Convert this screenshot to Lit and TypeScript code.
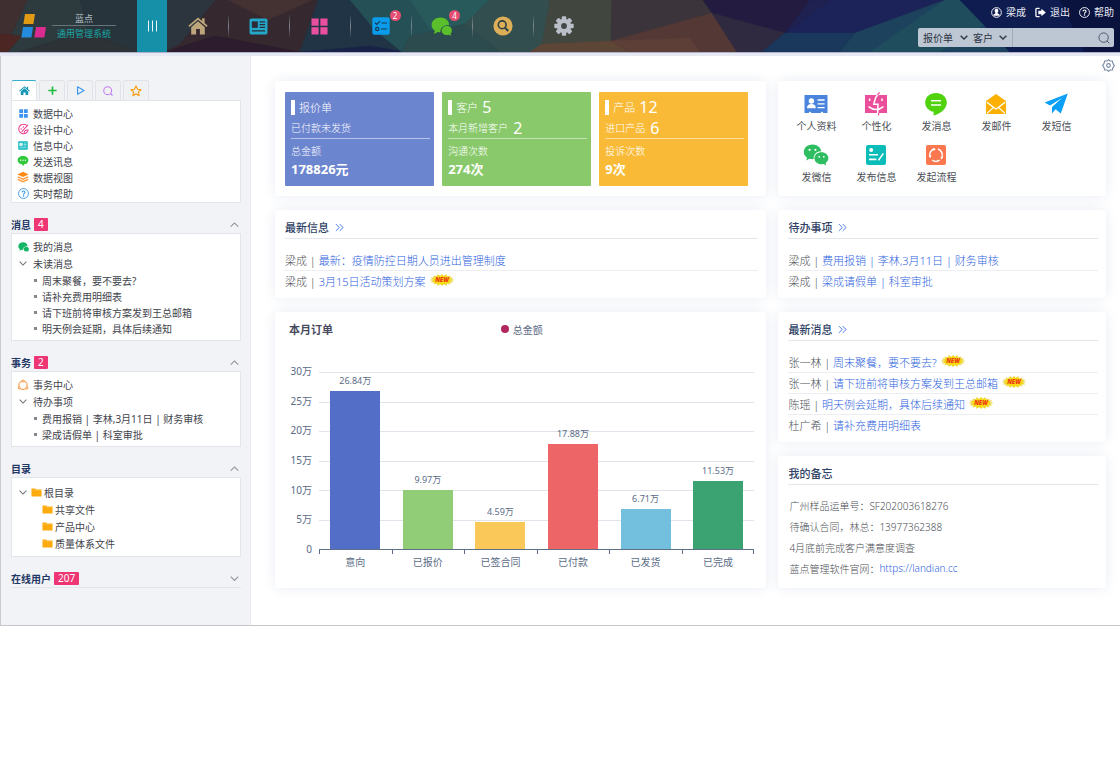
import { LitElement, html, css, svg, nothing, TemplateResult } from "lit";
import { customElement } from "lit/decorators.js";

const glyph = (box: string, w: number, h: number, body: TemplateResult) =>
  html`<svg class="glyph" viewBox=${box} width=${w} height=${h} aria-hidden="true">${body}</svg>`;

/* ---------- header glyphs ---------- */
const houseSolid = (size: number, color: string) =>
  glyph("0 0 20 18", size, size * 0.9, svg`
    <g fill=${color}><path d="M10 0.4 L0.3 8.8 L1.5 10.1 L10 2.8 L18.5 10.1 L19.7 8.8 L16.6 6.1 V1.2 H14.2 V4 Z"/>
    <path d="M10 4.3 L3.2 10.2 V17.6 H8.1 V12 H11.9 V17.6 H16.8 V10.2 Z"/></g>`);

const newspaper = (w: number, h: number, color: string, hole: string) =>
  glyph("0 0 20 18", w, h, svg`
    <rect x="0.5" y="0.5" width="19" height="17" rx="2" fill=${color}/>
    <g fill="none" stroke=${hole} stroke-width="1.3"><rect x="3.6" y="4.2" width="5" height="5.6" fill=${hole}/>
    <path d="M11.2 4 H17 M11.2 7 H17 M11.2 10 H17 M3 13.6 H17"/></g>`);

const tiles = (size: number, color: string) =>
  glyph("0 0 18 18", size, size, svg`
    <path fill=${color} d="M0.5 0.5 h7.6 v7.6 h-7.6z M9.9 0.5 h7.6 v7.6 h-7.6z M0.5 9.9 h7.6 v7.6 h-7.6z M9.9 9.9 h7.6 v7.6 h-7.6z"/>`);

const checklist = glyph("0 0 18 18", 18, 18, svg`
  <rect x="0.3" y="0.3" width="17.4" height="17.4" rx="2" fill="#0a9bea"/>
  <g fill="none" stroke="#17384c" stroke-width="1.2"><path d="M3 5.8 L4.8 7.4 L8 4.2 M9.5 6 H15 M9 12 H15"/><circle cx="5.2" cy="12" r="1.6"/></g>`);

const chats = (w: number, h: number, color: string) =>
  glyph("0 0 21 19", w, h, svg`
    <g fill=${color}><path d="M9.6 0.6 C4.4 0.6 0.6 4 0.6 8 C0.6 10.4 1.9 12.5 3.9 13.8 L2.8 17 L7 14.9 C7.8 15.1 8.6 15.2 9.4 15.2 C9.2 10.8 12.4 7.8 18.2 8 C18.1 3.8 14.4 0.6 9.6 0.6 Z"/>
    <path d="M16 8.9 C12.9 8.9 10.6 11 10.6 13.5 C10.6 16.1 12.9 18 15.9 18 L17.4 17.8 L20.2 18.8 L19.6 16.5 C20.5 15.7 20.9 14.7 20.9 13.5 C20.9 11 18.9 8.9 16 8.9 Z"/></g>`);

const searchDisc = glyph("0 0 20 20", 20, 20, svg`
  <circle cx="10" cy="10" r="9.6" fill="#dcae57"/>
  <g fill="none" stroke="#2b4246"><circle cx="9.2" cy="8.8" r="3.9" stroke-width="1.6"/><path d="M12 11.7 L15.2 15" stroke-width="2"/></g>`);

const cogSolid = glyph("0 0 20 20", 20, 20, svg`
  <g fill="#b9bec9">
    ${[0, 45, 90, 135].map((a) => svg`<rect x="7.8" y="0.3" width="4.4" height="19.4" rx="1" transform="rotate(${a} 10 10)"/>`)}
    <circle cx="10" cy="10" r="7.2"/></g><circle cx="10" cy="10" r="2.9" fill="#434747"/>`);

const userIcon = glyph("0 0 12 12", 11, 11, svg`
  <circle cx="6" cy="6" r="5.3" fill="none" stroke="#fff"/><path fill="#fff" d="M6 2 a2 2.3 0 0 1 1.2 4.2 L7.2 7 L9.2 8 V9.6 H2.8 V8 L4.8 7 V6.2 A2 2.3 0 0 1 6 2Z"/>`);
const exitIcon = glyph("0 0 12 12", 11, 11, svg`
  <path d="M5 1.6 H2 Q1 1.6 1 2.6 V9.4 Q1 10.4 2 10.4 H5" fill="none" stroke="#fff" stroke-width="1.4"/><path fill="#fff" d="M3.6 4.2 H7 V1.8 L11.8 6 L7 10.2 V7.8 H3.6Z"/>`);
const helpIcon = (size: number, color: string) => glyph("0 0 12 12", size, size, svg`
  <g fill="none" stroke=${color}><circle cx="6" cy="6" r="5.4"/><path stroke-width="1.2" d="M4.3 4.8 Q4.4 3.2 6 3.2 Q7.7 3.2 7.7 4.6 Q7.7 5.5 6.7 6 Q6 6.4 6 7.3"/></g><circle cx="6" cy="8.8" r="0.8" fill=${color}/>`);

const magnifier = (size: number, color: string, sw: number) => glyph("0 0 12 12", size, size, svg`
  <g fill="none" stroke=${color} stroke-width=${sw}><circle cx="5.6" cy="5.6" r="4.7"/><path d="M9 9 L11.4 11.4"/></g>`);

const chevron = (dir: "up" | "down", color: string, w = 10, sw = 1.3) => glyph("0 0 10 6", w, w * 0.6, svg`
  <path fill="none" stroke=${color} stroke-width=${sw} d=${dir === "up" ? "M0.8 5.2 L5 1 L9.2 5.2" : "M0.8 0.8 L5 5 L9.2 0.8"}/>`);

const cogLine = glyph("0 0 24 24", 13, 13, svg`
  <g fill="none" stroke="#7486a5" stroke-width="2"><circle cx="12" cy="12" r="3.4"/>
  <path stroke-linejoin="round" d="M12 1.2 L15 3.8 L19.2 3.8 L20.2 8 L22.8 12 L20.2 16 L19.2 20.2 L15 20.2 L12 22.8 L9 20.2 L4.8 20.2 L3.8 16 L1.2 12 L3.8 8 L4.8 3.8 L9 3.8 Z"/></g>`);

/* ---------- sidebar glyphs ---------- */
const plus = glyph("0 0 12 12", 11, 11, svg`<path d="M6 1.5 V10.5 M1.5 6 H10.5" stroke="#1ebd3f" stroke-width="1.8"/>`);
const play = glyph("0 0 12 12", 11, 11, svg`<path d="M2.8 2 L9.8 6 L2.8 10 Z" fill="none" stroke="#3b97ee" stroke-width="1.3" stroke-linejoin="round"/>`);
const star = glyph("0 0 12 12", 12, 12, svg`<path d="M6 1 L7.5 4.3 L11 4.7 L8.4 7.1 L9.1 10.6 L6 8.9 L2.9 10.6 L3.6 7.1 L1 4.7 L4.5 4.3 Z" fill="none" stroke="#f5a21b" stroke-width="1.2" stroke-linejoin="round"/>`);
const palette = glyph("0 0 12 12", 11, 11, svg`
  <g fill="none" stroke="#ee3f8f" stroke-width="1.1"><path d="M9.6 1.6 A5.2 5.2 0 1 0 11.2 6"/><path d="M11 1 L5.4 7 L4 8.6 M7.4 7.6 Q8.6 6.4 11 6.6 M7 10.8 Q6.4 9 7.4 7.6"/></g>
  <g fill="#ee3f8f"><circle cx="3.4" cy="5.4" r="0.8"/><circle cx="5.8" cy="3.2" r="0.8"/></g>`);
const talk = glyph("0 0 12 12", 12, 12, svg`
  <path fill="#2fc93a" d="M6 1 C2.9 1 0.6 2.8 0.6 5.2 C0.6 7.4 2.6 9 5 9.3 L6 11.2 L7.2 9.3 C9.7 9 11.4 7.3 11.4 5.2 C11.4 2.8 9.1 1 6 1Z"/>
  <g fill="#fff"><circle cx="3.6" cy="5.2" r="0.7"/><circle cx="6" cy="5.2" r="0.7"/><circle cx="8.4" cy="5.2" r="0.7"/></g>`);
const layers = glyph("0 0 12 12", 12, 12, svg`
  <path fill="#ff8a14" d="M6 0.8 L11.6 3.4 L6 6 L0.4 3.4Z"/><path d="M0.8 5.8 L6 8.2 L11.2 5.8 M0.8 8.3 L6 10.7 L11.2 8.3" fill="none" stroke="#ff9c3b" stroke-width="1.3"/>`);
const cycleNodes = (color: string, size: number) => glyph("0 0 12 12", size, size, svg`
  <circle cx="6" cy="6.3" r="4.1" fill="none" stroke=${color} stroke-width="1"/>
  <g fill="#fff" stroke=${color} stroke-width="0.8"><circle cx="6" cy="2" r="1.1"/><circle cx="2.2" cy="9" r="1.1"/><circle cx="9.8" cy="9" r="1.1"/></g>`);
const folder = glyph("0 0 12 10", 11, 9, svg`<path fill="#fdab0c" d="M0.4 0.5 H4.6 L5.6 1.6 H11.6 V9.5 H0.4Z"/><path d="M0.4 2.5 H11.6" stroke="#ffd07a" stroke-width="0.4"/>`);

/* ---------- quick action glyphs ---------- */
const quickIcons = {
  profile: glyph("0 0 24 20", 24, 20, svg`
    <path fill="#4a84dd" d="M0.5 1 H23.5 V19 H19.5 L18 17.6 L16.5 19 H7.5 L6 17.6 L4.5 19 H0.5Z"/>
    <g fill="#fff"><circle cx="7.4" cy="7" r="2.7"/><path d="M3 14.2 Q3 10 7.4 10 Q11.8 10 11.8 14.2Z"/></g>
    <path d="M13.6 6 H20.6 M13.6 9.8 H20.6 M13.6 13.6 H20.6" stroke="#fff" stroke-width="1.3"/>`),
  personal: glyph("0 0 24 24", 24, 24, svg`
    <rect x="1" y="3" width="22" height="18" fill="#eb4f9b"/>
    <g fill="none" stroke="#fff" stroke-width="1.5"><path d="M15 1.6 L12 5 Q10.6 8 9.8 12.2 H14 L13.6 22"/><path d="M4.6 14.6 Q12 20.6 19.4 14.6"/><path d="M5.6 6.4 V9 M18 6.4 V9"/></g>
    <path d="M15.6 0.4 L13.4 3 M14.6 21 V23.4" stroke="#eb4f9b" stroke-width="1.2"/>`),
  message: glyph("0 0 24 24", 24, 24, svg`
    <path fill="#50d20d" d="M12 1 C5.8 1 1.2 5 1.2 10.4 C1.2 15.4 5 19 9.6 19.7 V23.4 C13.6 22.4 22.8 18.4 22.8 10.4 C22.8 5 18.2 1 12 1Z"/>
    <path d="M7 8.8 H17 M7 13 H17" stroke="#fff" stroke-width="1.5"/>`),
  mail: glyph("0 0 24 24", 24, 24, svg`
    <path fill="#fbb003" d="M2 9 L12 2 L22 9 V22 H2Z"/>
    <path d="M2.6 10 L9.6 15.4 L3 21.4 M21.4 10 L14.4 15.4 L21 21.4 M9.6 15.4 L12 17 L14.4 15.4" fill="none" stroke="#fff" stroke-width="1.2"/>`),
  sms: glyph("0 0 24 24", 24, 24, svg`
    <path fill="#0aa0f8" d="M23.8 1.6 L0.6 10.4 L6 13.4 L18 6 L8 15 V21.6 L11.6 17.2 L16.8 21.6Z"/>`),
  wechat: glyph("0 0 26 24", 26, 24, svg`
    <path fill="#2ebd60" d="M9.6 1.6 C4.6 1.6 0.8 4.8 0.8 8.9 C0.8 11.2 2 13.2 4 14.6 L3.2 17.4 L6.4 15.8 C8 16.3 9.4 16.3 10.8 16.1 C10 11.4 14 8 18.4 8.2 C17.6 4.4 14 1.6 9.6 1.6Z"/>
    <path fill="#2ebd60" d="M18.4 9.3 C14.4 9.3 11.4 12 11.4 15.3 C11.4 18.7 14.6 21.3 18.4 21.3 L20.6 21 L23.2 22.4 L22.6 20 C24.4 18.8 25.4 17.2 25.4 15.3 C25.4 12 22.4 9.3 18.4 9.3Z"/>
    <g fill="#fff"><circle cx="6.6" cy="6.8" r="1.1"/><circle cx="12.4" cy="6.8" r="1.1"/><circle cx="16.2" cy="13.8" r="0.9"/><circle cx="20.8" cy="13.8" r="0.9"/></g>`),
  publish: glyph("0 0 24 24", 24, 24, svg`
    <rect x="2" y="2" width="20" height="20" rx="2" fill="#0bbcb9"/><circle cx="7.2" cy="7" r="2" fill="#fff"/>
    <path d="M5 11.8 H14 M5 16.4 H12.4 M14.4 17.4 L19.4 10.4" stroke="#fff" stroke-width="1.6"/>`),
  flow: glyph("0 0 24 24", 24, 24, svg`
    <rect x="2" y="2" width="20" height="20" rx="2" fill="#fb7750"/>
    <g fill="none" stroke="#fff" stroke-width="1.5"><path d="M10 6 A6.3 6.3 0 0 0 6 13.8 M8.2 17 A6.3 6.3 0 0 0 15.6 17.2 M18 13.8 A6.3 6.3 0 0 0 14 6"/></g>
    <g fill="#fff"><path d="M9.4 4.4 L11.8 6.2 L9.4 8Z"/><path d="M4.6 12.6 H7.6 L6.2 15.2Z"/><path d="M16.2 14.2 L19.4 13.6 L17.8 16.6Z"/></g>`),
};

const burst = (() => {
  const pts: string[] = [];
  for (let i = 0; i < 32; i++) {
    const a = (i / 32) * Math.PI * 2;
    const k = i % 2 ? 0.72 : 1;
    pts.push(`${(12 + Math.cos(a) * 11.8 * k).toFixed(1)},${(6 + Math.sin(a) * 5.8 * k).toFixed(1)}`);
  }
  return pts.join(" ");
})();
const newBadge = html`<svg class="new" viewBox="0 0 24 12" width="24" height="12" role="img" aria-label="NEW">
  <polygon points=${burst} fill="#f6dc12" stroke="#d9bf2c" stroke-width="0.3"/>
  <text x="12" y="8" text-anchor="middle" class="new-text">NEW</text></svg>`;

/* ---------- faceted header backdrop ---------- */
const facets: [string, string][] = [
  ["0,0 28,0 12,34 0,38", "#3f2f30"],
  ["0,34 22,36 8,52 0,52", "#4b2623"],
  ["28,0 80,0 88,30 20,52 8,52 22,36 12,34", "#2d3b3f"],
  ["80,0 140,0 140,52 100,38 88,30", "#27343c"],
  ["20,52 88,30 100,38 140,52", "#2d3237"],
  ["140,0 216,0 180,44 165,52 140,52", "#2c353d"],
  ["216,0 320,0 345,14 300,52 165,52 180,44", "#35282f"],
  ["228,0 312,0 268,20", "#443132"],
  ["165,52 215,36 300,52", "#2d1c2e"],
  ["318,0 352,0 404,52 300,52", "#213445"],
  ["300,52 370,46 405,52", "#192349"],
  ["350,0 455,0 465,24 410,36 402,52 375,30", "#255056"],
  ["410,0 490,0 465,24 430,30", "#28595b"],
  ["402,52 410,36 465,24 500,52", "#2c4b4f"],
  ["465,24 490,0 550,0 545,52 500,52", "#324e4e"],
  ["550,0 612,0 611,41 542,44", "#41463f"],
  ["530,52 542,44 611,41 632,52", "#5e4636"],
  ["612,0 703,0 712,13 611,41", "#3b353b"],
  ["611,41 712,13 737,52 630,52", "#533836"],
  ["611,41 690,38 700,52 630,52", "#5d3f37"],
  ["703,0 810,0 785,33 712,13", "#241c40"],
  ["712,13 785,33 762,52 737,52", "#302a40"],
  ["785,33 830,0 945,0 855,33", "#1c2358"],
  ["785,33 855,33 840,52 762,52", "#1a375c"],
  ["810,0 830,0 785,33", "#1f2150"],
  ["855,33 945,0 960,0 1010,52 840,52", "#1d425e"],
  ["945,0 960,0 985,24 940,52 870,52", "#1f4d5e"],
  ["960,0 1120,0 1120,52 1010,52", "#0e1c50"],
  ["1060,0 1120,0 1120,52 1085,52", "#0a123e"],
];

@customElement("app-header")
class AppHeader extends LitElement {
  static styles = css`
    :host { display: block; color: #fff; font-size: 10px; }
    .bar { position: relative; display: flex; height: 52px; background: #222a3c; border-bottom: 1px solid #aeb0c8; box-shadow: 0 3px 0 #e6e8f3; }
    .backdrop { position: absolute; inset: 0; width: 100%; height: 100%; }
    .brand, .toggle, .nav, .tools { position: relative; }
    .brand { display: flex; align-items: center; gap: 5px; width: 137px; padding-left: 21px; box-sizing: border-box; }
    .names { display: flex; flex-direction: column; align-items: center; width: 64px; font-size: 9px; line-height: 13px; color: #b4bfc4; }
    .name { border-bottom: 1px solid #66757b; align-self: stretch; text-align: center; }
    .product { color: #1aa6a4; white-space: nowrap; padding-top: 1px; }
    .toggle { width: 30px; border: 0; padding: 0; background: #168fa9; display: flex; align-items: center; justify-content: center; }
    .nav { display: flex; }
    .entry { display: flex; align-items: center; justify-content: center; width: 61px; }
    .entry + .entry { background: linear-gradient(transparent, #7c8690 50%, transparent) left center / 1px 24px no-repeat; }
    .mark { position: relative; display: flex; }
    .count { position: absolute; left: 18px; top: -7px; background: #e44c72; color: #fff; border-radius: 6px; width: 11px; height: 11px; font-size: 8px; line-height: 11px; text-align: center; }
    .tools { margin-left: auto; padding: 5px 6px 0 0; display: flex; flex-direction: column; align-items: flex-end; gap: 8px; }
    .user { display: flex; gap: 9px; line-height: 15px; }
    .user a { display: flex; align-items: center; gap: 4px; color: #e8eaf2; text-decoration: none; }
    .search { display: flex; align-items: center; width: 196px; height: 19px; background: #bcc7d3; border-radius: 2px; color: #2a3040; box-sizing: border-box; }
    .pick { display: grid; align-items: center; justify-items: end; padding: 0 5px; }
    .pick + .pick { padding-left: 0; border-right: 1px solid #a0aabc; height: 100%; }
    .pick > * { grid-area: 1 / 1; }
    .pick svg { pointer-events: none; }
    select, input { font: inherit; color: inherit; border: 0; padding: 0; background: none; outline: 0; }
    select { appearance: none; justify-self: stretch; height: 19px; }
    .wide { width: 45px; }
    .narrow { width: 34px; }
    input { flex: 1; min-width: 0; height: 19px; }
    .go { display: flex; border: 0; background: none; padding: 0 4px; }
  `;
  render() {
    const nav: [string, TemplateResult, string?][] = [
      ["首页", houseSolid(20, "#bda67b")],
      ["资讯", newspaper(19, 17, "#23a8c9", "#2e2b39")],
      ["应用", tiles(17, "#ea4f9f")],
      ["任务", checklist, "2"],
      ["消息", chats(21, 19, "#5bbf2b"), "4"],
      ["搜索", searchDisc],
      ["设置", cogSolid],
    ];
    return html`<header class="bar">
      <svg class="backdrop" viewBox="0 0 1120 52" preserveAspectRatio="none" aria-hidden="true">
        ${facets.map(([p, c]) => svg`<polygon points=${p} fill=${c} stroke=${c} stroke-width="0.5"/>`)}
      </svg>
      <div class="brand">
        <svg viewBox="0 0 26 26" width="26" height="26" aria-hidden="true">
          <path fill="#e19a13" d="M4 1 H14 L12.4 11 H2.4Z"/><path fill="#258bdc" d="M2 14 H12 L10.4 24.6 H0.4Z"/><path fill="#da2c90" d="M15 14 H25 L23.4 24.6 H13.4Z"/>
        </svg>
        <div class="names"><span class="name">蓝点</span><span class="product">通用管理系统</span></div>
      </div>
      <button class="toggle" aria-label="菜单">${glyph("0 0 10 12", 10, 12, svg`<path d="M1.5 0.5 V11.5 M5.5 0.5 V11.5 M9.5 0.5 V11.5" stroke="#eaf6f9" stroke-width="1"/>`)}</button>
      <nav class="nav">
        ${nav.map(([label, icon, n]) => html`<a class="entry" href="#" aria-label=${label}><span class="mark">${icon}${n ? html`<span class="count">${n}</span>` : nothing}</span></a>`)}
      </nav>
      <div class="tools">
        <div class="user">
          <a href="#">${userIcon}梁成</a><a href="#">${exitIcon}退出</a><a href="#">${helpIcon(11, "#fff")}帮助</a>
        </div>
        <div class="search">
          <label class="pick"><select class="wide" aria-label="单据"><option>报价单</option></select>${chevron("down", "#2f3848", 8, 1.8)}</label>
          <label class="pick"><select class="narrow" aria-label="对象"><option>客户</option></select>${chevron("down", "#2f3848", 8, 1.8)}</label>
          <input type="text" aria-label="关键字" />
          <button class="go" aria-label="搜索">${magnifier(12, "#4d566c", 1)}</button>
        </div>
      </div>
    </header>`;
  }
}

@customElement("app-sidebar")
class AppSidebar extends LitElement {
  static styles = css`
    :host { display: block; box-sizing: border-box; background: #f2f3f6; border-right: 1px solid #e9ebef; padding: 24px 9px 37px 10px; font-size: 10px; color: #3f444c; }
    .tabs { display: flex; gap: 2px; }
    .tab { width: 26px; height: 20px; padding: 0; display: flex; align-items: center; justify-content: center; background: #f0f1f3; border: 1px solid #dfe2e6; border-bottom: 0; border-radius: 3px 3px 0 0; }
    .tab.on { background: #fff; border-top-color: #37aecb; }
    .box { background: #fff; border: 1px solid #e2e5e9; padding: 5px; }
    .box.first { padding: 4px 5px 1px; }
    .box.tree { padding: 4px 5px; }
    .box.files { padding-top: 6px; }
    .row { display: flex; align-items: center; gap: 4px; height: 16px; color: inherit; text-decoration: none; white-space: nowrap; }
    .tree .row { height: 17px; }
    .tree .leaf { height: 16px; gap: 5px; padding-left: 17px; }
    .leaf::before { content: ""; width: 3px; height: 3px; background: #85898f; }
    .slot { width: 12px; display: flex; justify-content: center; }
    .file.row { padding-left: 25px; gap: 2px; }
    .root.row { gap: 2px; }
    .head { display: flex; align-items: center; gap: 3px; height: 18px; margin-top: 12px; border-bottom: 1px solid #e2e5e9; font-weight: 700; color: #1f3865; }
    .head + .box { border-top: 0; }
    .head span { background: #ef3674; color: #fff; font-weight: 400; line-height: 13px; padding: 0 4px; border-radius: 1px; }
    .head button { margin-left: auto; padding: 2px 2px 0; border: 0; background: none; display: flex; }
    .glyph { flex: none; }
  `;
  private head(title: string, n: string, dir: "up" | "down" = "up") {
    return html`<div class="head">${title}${n ? html`<span>${n}</span>` : nothing}<button aria-label=${title}>${chevron(dir, "#8d939c", 9, 1.2)}</button></div>`;
  }
  private row(icon: TemplateResult, text: string) {
    return html`<a class="row" href="#"><span class="slot">${icon}</span>${text}</a>`;
  }
  private leaf(text: string) {
    return html`<a class="row leaf" href="#">${text}</a>`;
  }
  render() {
    const fold = chevron("down", "#6c727a", 8, 1.3);
    const tabs: [string, TemplateResult][] = [
      ["首页", houseSolid(11, "#1597b5")], ["新增", plus], ["运行", play], ["搜索", magnifier(10, "#c07ef0", 1.3)], ["收藏", star],
    ];
    return html`
      <div class="tabs">${tabs.map(([l, i], k) => html`<button class="tab ${k ? "" : "on"}" aria-label=${l}>${i}</button>`)}</div>
      <div class="box first">
        ${this.row(tiles(9, "#3c93f0"), "数据中心")}
        ${this.row(palette, "设计中心")}
        ${this.row(newspaper(10, 9, "#0fb8bf", "#d8f4f5"), "信息中心")}
        ${this.row(talk, "发送讯息")}
        ${this.row(layers, "数据视图")}
        ${this.row(helpIcon(11, "#3b97e8"), "实时帮助")}
      </div>
      ${this.head("消息", "4")}
      <div class="box tree">
        ${this.row(chats(11, 10, "#12b565"), "我的消息")}
        ${this.row(fold, "未读消息")}
        ${["周末聚餐，要不要去?", "请补充费用明细表", "请下班前将审核方案发到王总邮箱", "明天例会延期，具体后续通知"].map((t) => this.leaf(t))}
      </div>
      ${this.head("事务", "2")}
      <div class="box tree">
        ${this.row(cycleNodes("#f58b2e", 12), "事务中心")}
        ${this.row(fold, "待办事项")}
        ${["费用报销 | 李林,3月11日 | 财务审核", "梁成请假单 | 科室审批"].map((t) => this.leaf(t))}
      </div>
      ${this.head("目录", "")}
      <div class="box tree files">
        <a class="row root" href="#"><span class="slot">${fold}</span>${folder}根目录</a>
        ${["共享文件", "产品中心", "质量体系文件"].map((t) => html`<a class="row file" href="#">${folder}${t}</a>`)}
      </div>
      ${this.head("在线用户", "207", "down")}`;
  }
}

@customElement("order-chart")
class OrderChart extends LitElement {
  static styles = css`
    :host { display: flex; flex-direction: column; flex: 1; font-size: 10px; color: #5a6b85; }
    .top { display: grid; grid-template-columns: 1fr auto 1fr; align-items: center; height: 22px; }
    h2 { margin: 0; font-size: 11px; color: #464a5c; }
    .legend { display: flex; align-items: center; gap: 4px; }
    .legend::before { content: ""; width: 8px; height: 8px; border-radius: 50%; background: #b3275f; }
    .plot { flex: 1; min-height: 160px; display: grid; grid-template-columns: 23px 1fr; grid-template-rows: 1fr 23px; column-gap: 7px; margin-top: 32px; }
    .scale { display: flex; flex-direction: column; justify-content: space-between; text-align: right; line-height: 12px; margin: -7px 0 -5px; }
    .lines, .bars { grid-area: 1 / 2; display: flex; }
    .lines { flex-direction: column; justify-content: space-between; }
    .lines i { height: 1px; background: #e0e3ea; }
    .lines i:last-child { background: #5d6f86; }
    .bars { position: relative; height: 100%; padding-bottom: 1px; box-sizing: border-box; }
    .col { flex: 1; display: flex; flex-direction: column; justify-content: flex-end; align-items: center; height: 100%; }
    .col span { font-size: 9px; line-height: 12px; padding-bottom: 4px; flex: none; }
    .bar { width: 69%; flex: none; }
    .cats { grid-area: 2 / 2; display: flex; text-align: center; line-height: 24px; }
    .cats span { flex: 1; background: linear-gradient(#5d6f86, #5d6f86) left top / 1px 4px no-repeat; }
    .cats span:last-child { background: linear-gradient(#5d6f86, #5d6f86) left top / 1px 4px no-repeat, linear-gradient(#5d6f86, #5d6f86) right top / 1px 4px no-repeat; }
  `;
  render() {
    const data: [string, number, string][] = [
      ["意向", 26.84, "#536ec7"], ["已报价", 9.97, "#91cc76"], ["已签合同", 4.59, "#fac858"],
      ["已付款", 17.88, "#ee6567"], ["已发货", 6.71, "#73bfde"], ["已完成", 11.53, "#3ba272"],
    ];
    const ticks = ["30万", "25万", "20万", "15万", "10万", "5万", "0"];
    return html`
      <div class="top"><h2>本月订单</h2><span class="legend">总金额</span></div>
      <div class="plot">
        <div class="scale">${ticks.map((t) => html`<span>${t}</span>`)}</div>
        <div class="lines">${ticks.map(() => html`<i></i>`)}</div>
        <div class="bars">${data.map(([, v, c]) => html`<div class="col"><span>${v}万</span><div class="bar" style="height:${(v / 30) * 100}%;background:${c}"></div></div>`)}</div>
        <div class="cats">${data.map(([n]) => html`<span>${n}</span>`)}</div>
      </div>`;
  }
}

type Item = { who: string; text: string; fresh?: boolean };

@customElement("app-root")
class AppRoot extends LitElement {
  static styles = css`
    :host { display: block; background: #fff; font-family: "Noto Sans", "Noto Sans CJK SC", sans-serif; font-size: 11px; }
    .shell { border-left: 1px solid #c9cacc; border-bottom: 1px solid #c4c6c9; }
    .body { display: grid; grid-template-columns: 250px 1fr; padding-top: 3px; }
    app-header { margin-left: -1px; }
    .main { padding: 0 14px 36px 24px; }
    .strip { display: flex; justify-content: flex-end; align-items: center; height: 18px; margin: 0 -9px 7px 0; }
    .strip button { display: flex; border: 0; background: none; padding: 0; }
    .cols { display: grid; grid-template-columns: 3fr 2fr; gap: 12px; }
    .stack { display: flex; flex-direction: column; gap: 14px; min-width: 0; }
    .panel { background: #fff; border-radius: 3px; box-shadow: 0 0 14px #e9ecf3; padding: 6px 8px 6px 10px; }
    .stats { display: grid; grid-template-columns: repeat(3, 1fr); gap: 8px; padding: 11px 18px 10px 10px; }
    .stat { border-radius: 1px; padding: 5px 4px 10px 6px; color: #fff; font-size: 10px; font-weight: 300; }
    .blue { background: #6c85cf; }
    .green { background: #89c96b; }
    .amber { background: #f9bb37; }
    .line { display: flex; align-items: center; gap: 5px; height: 20px; }
    .lead { font-size: 11px; gap: 4px; height: 20px; }
    .lead::before { content: ""; width: 4px; height: 15px; background: #fff; }
    .ruled { border-bottom: 1px solid #ffffff80; height: 21px; }
    .num { font-size: 16px; font-weight: 400; line-height: 20px; }
    .cap { height: 23px; }
    .total { font-size: 13px; font-weight: 700; line-height: 14px; }
    .quick { display: grid; grid-template-columns: repeat(auto-fill, 60px); row-gap: 7px; padding: 9px 8px 11px; }
    .act { display: flex; flex-direction: column; align-items: center; font-size: 10px; line-height: 16px; color: #4b4f56; text-decoration: none; }
    .pic { height: 28px; display: flex; align-items: center; }
    .title { display: flex; align-items: center; gap: 6px; margin: 0 0 11px; height: 22px; font-size: 11px; font-weight: 500; color: #2f4265; border-bottom: 1px solid #e3e6ea; }
    ul { list-style: none; margin: 0; padding: 0; }
    li { display: flex; align-items: center; height: 20px; color: #4c4f55; font-weight: 300; white-space: pre; border-bottom: 1px solid #eceef1; }
    li:last-child { border-bottom-color: transparent; }
    li a { color: #2f64e0; text-decoration: none; }
    .new { margin: 0 0 2px 4px; }
    .new-text { font: italic 900 6px "Noto Sans", sans-serif; fill: #ee3a12; }
    .memo { padding-bottom: 9px; }
    .memo .title { margin-bottom: 10px; }
    .memo ul { font-size: 10px; }
    .memo li { border-bottom-color: transparent; padding-left: 1px; }
    .chart { flex: 1; display: flex; flex-direction: column; padding: 6px 12px 15px 14px; }
    @media (max-width: 860px) { .cols { grid-template-columns: 1fr; } }
  `;
  private title(text: string, more = true) {
    return html`<h2 class="title">${text}${more
      ? glyph("0 0 10 9", 9, 9, svg`<path d="M1 0.7 L4.8 4.5 L1 8.3 M5.2 0.7 L9 4.5 L5.2 8.3" fill="none" stroke="#4a7be8" stroke-width="1.1"/>`)
      : nothing}</h2>`;
  }
  private list(items: Item[]) {
    return html`<ul>${items.map((i) => html`<li><span>${i.who} | </span><a href="#">${i.text}</a>${i.fresh ? newBadge : nothing}</li>`)}</ul>`;
  }
  render() {
    const stats = [
      { tone: "blue", a: "报价单", an: "", b: "已付款未发货", bn: "", c: "总金额", d: "178826元" },
      { tone: "green", a: "客户", an: "5", b: "本月新增客户", bn: "2", c: "沟通次数", d: "274次" },
      { tone: "amber", a: "产品", an: "12", b: "进口产品", bn: "6", c: "投诉次数", d: "9次" },
    ];
    const acts: [TemplateResult, string][] = [
      [quickIcons.profile, "个人资料"], [quickIcons.personal, "个性化"], [quickIcons.message, "发消息"], [quickIcons.mail, "发邮件"],
      [quickIcons.sms, "发短信"], [quickIcons.wechat, "发微信"], [quickIcons.publish, "发布信息"], [quickIcons.flow, "发起流程"],
    ];
    return html`<div class="shell">
      <app-header></app-header>
      <div class="body">
        <app-sidebar></app-sidebar>
        <main class="main">
          <div class="strip"><button aria-label="设置">${cogLine}</button></div>
          <div class="cols">
            <div class="stack">
              <section class="panel stats">
                ${stats.map((s) => html`<div class="stat ${s.tone}">
                  <div class="line lead">${s.a}${s.an ? html`<span class="num">${s.an}</span>` : nothing}</div>
                  <div class="line ruled">${s.b}${s.bn ? html`<span class="num">${s.bn}</span>` : nothing}</div>
                  <div class="line cap">${s.c}</div>
                  <div class="total">${s.d}</div>
                </div>`)}
              </section>
              <section class="panel">
                ${this.title("最新信息")}
                ${this.list([{ who: "梁成", text: "最新：疫情防控日期人员进出管理制度" }, { who: "梁成", text: "3月15日活动策划方案", fresh: true }])}
              </section>
              <section class="panel chart"><order-chart></order-chart></section>
            </div>
            <div class="stack">
              <section class="panel quick">
                ${acts.map(([i, t]) => html`<a class="act" href="#"><span class="pic">${i}</span>${t}</a>`)}
              </section>
              <section class="panel">
                ${this.title("待办事项")}
                ${this.list([{ who: "梁成", text: "费用报销 | 李林,3月11日 | 财务审核" }, { who: "梁成", text: "梁成请假单 | 科室审批" }])}
              </section>
              <section class="panel">
                ${this.title("最新消息")}
                ${this.list([
                  { who: "张一林", text: "周末聚餐，要不要去?", fresh: true },
                  { who: "张一林", text: "请下班前将审核方案发到王总邮箱", fresh: true },
                  { who: "陈瑶", text: "明天例会延期，具体后续通知", fresh: true },
                  { who: "杜广希", text: "请补充费用明细表" },
                ])}
              </section>
              <section class="panel memo">
                ${this.title("我的备忘", false)}
                <ul>
                  <li>广州样品运单号：SF202003618276</li>
                  <li>待确认合同，林总：13977362388</li>
                  <li>4月底前完成客户满意度调查</li>
                  <li>蓝点管理软件官网：<a href="https://landian.cc">https://landian.cc</a></li>
                </ul>
              </section>
            </div>
          </div>
        </main>
      </div>
    </div>`;
  }
}
